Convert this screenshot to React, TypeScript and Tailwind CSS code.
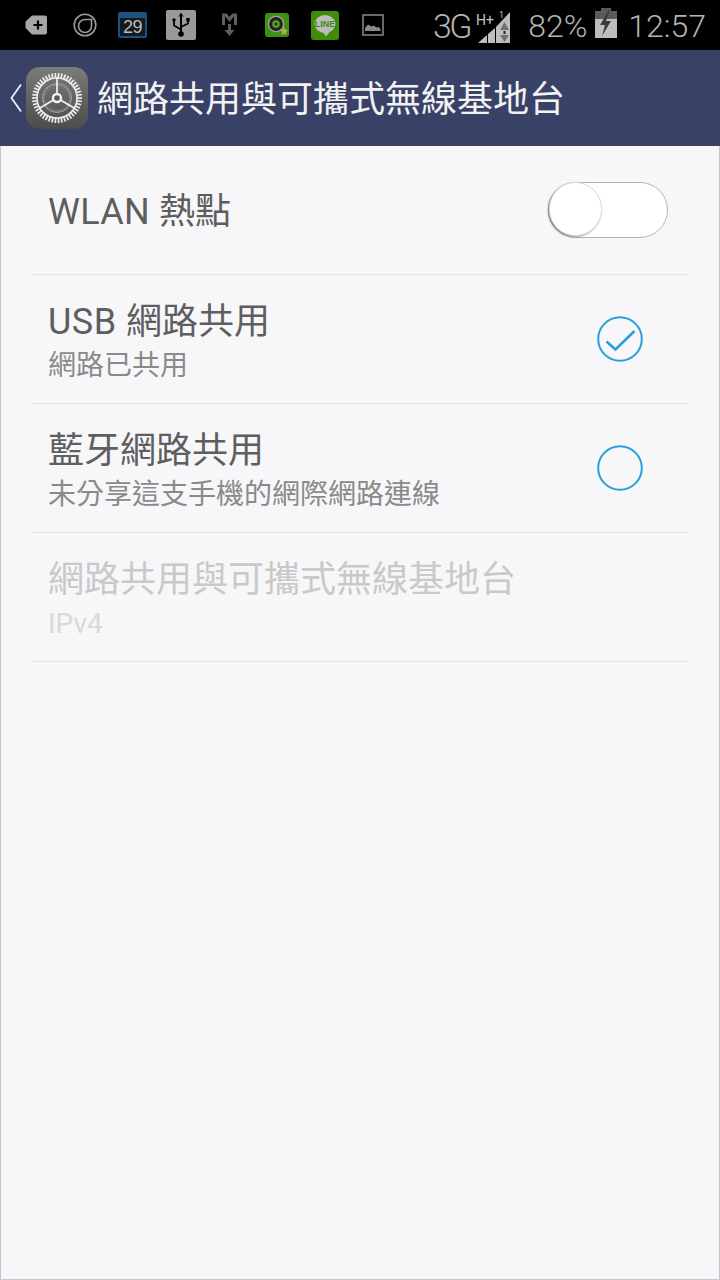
import React from "react";

const FONT = "font-['Roboto','Noto_Sans_CJK_TC',sans-serif]";

function Teeth({ count, r1, r2, color, w }: { count: number; r1: number; r2: number; color: string; w: number }) {
  const out = [];
  for (let i = 0; i < count; i++) {
    const a = (i / count) * Math.PI * 2;
    out.push(
      <line
        key={i}
        x1={31 + Math.cos(a) * r1}
        y1={31 + Math.sin(a) * r1}
        x2={31 + Math.cos(a) * r2}
        y2={31 + Math.sin(a) * r2}
        stroke={color}
        strokeWidth={w}
      />
    );
  }
  return <g>{out}</g>;
}

function SettingsIcon() {
  return (
    <svg width="62" height="62" viewBox="0 0 62 62" className="shrink-0">
      <defs>
        <linearGradient id="gearBg" x1="0" y1="0" x2="0" y2="1">
          <stop offset="0" stopColor="#7b7b79" />
          <stop offset="1" stopColor="#4c4c4b" />
        </linearGradient>
      </defs>
      <rect width="62" height="62" rx="14" fill="url(#gearBg)" />
      <Teeth count={46} r1={20} r2={25} color="#ececec" w={1.7} />
      <circle cx="31" cy="31" r="20" fill="none" stroke="#ececec" strokeWidth="1.600" />
      <circle cx="31" cy="31" r="14.500" fill="none" stroke="#a3a3a3" strokeWidth="1" />
      <Teeth count={40} r1={12} r2={14.5} color="#989898" w={0.9} />
      <g stroke="#f2f2f2" strokeWidth="1.700">
        <line x1="31" y1="27" x2="31" y2="10" />
        <line x1="27.500" y1="33" x2="13" y2="41.500" />
        <line x1="34.500" y1="33" x2="49" y2="41.500" />
      </g>
      <circle cx="31" cy="31" r="4" fill="#555" stroke="#f2f2f2" strokeWidth="2.400" />
    </svg>
  );
}

function StatusIcons() {
  return (
    <div className="flex items-center">
      {/* tag with plus */}
      <svg width="22" height="20" viewBox="0 0 22 20" className="ml-[25px]">
        <path d="M7 0.500H20a2 2 0 0 1 2 2V17.500a2 2 0 0 1-2 2H7L0.500 13V6.500Z" fill="#a6a6a6" />
        <path d="M13 5.500v9M8.500 10h9" stroke="#000" strokeWidth="2.200" />
      </svg>
      {/* circle */}
      <svg width="24" height="24" viewBox="0 0 24 24" className="ml-[26px]">
        <circle cx="12" cy="12" r="10.800" fill="none" stroke="#9a9a9a" strokeWidth="1.600" />
        <path d="M17.500 6.500H12a6.500 6.500 0 1 0 6.500 6.500V6.500Z" fill="none" stroke="#9a9a9a" strokeWidth="1.600" />
      </svg>
      {/* calendar */}
      <div className="ml-[21px] flex h-[26px] w-[29px] flex-col rounded-[2px] bg-[#1c5280] font-['Liberation_Sans',sans-serif]">
        <div className="mx-[7px] mt-[3px] h-px bg-[#8fb2cf]" />
        <div className="mx-[2px] mb-[2px] mt-[3px] flex flex-1 items-center justify-center bg-[#141a20] text-[18px] leading-none tracking-[-0.5px] text-[#bcbcbc]">
          29
        </div>
      </div>
      {/* usb */}
      <svg width="30" height="30" viewBox="0 0 30 30" className="ml-[19px]">
        <rect width="30" height="30" rx="2" fill="#999" />
        <path d="M15 3.500V24" stroke="#000" strokeWidth="2" />
        <path d="M15 3l-2.600 3.600h5.200Z" fill="#000" />
        <circle cx="15" cy="24" r="2.800" fill="#000" />
        <path d="M8 11v4.500l7 4M22 10v3.500l-7 3.500" fill="none" stroke="#000" strokeWidth="1.800" />
        <circle cx="8" cy="10" r="1.700" fill="#000" />
        <rect x="20.300" y="8" width="3.400" height="3.400" fill="#000" />
      </svg>
      {/* M down */}
      <svg width="15" height="24" viewBox="0 0 15 24" className="ml-[26px]">
        <path d="M1.500 12V2h2.500l3.500 4.500L11 2h2.500v10" fill="none" stroke="#5f5f5f" strokeWidth="3" />
        <path d="M6 11h3v6h3.500L7.500 23 2.500 17H6Z" fill="#5f5f5f" />
      </svg>
      {/* camera */}
      <svg width="24" height="24" viewBox="0 0 24 24" className="ml-[28px]">
        <rect width="24" height="24" rx="3" fill="#3f9113" />
        <circle cx="11" cy="11" r="7.600" fill="#222" stroke="#a5a5a5" strokeWidth="1.400" />
        <circle cx="11" cy="11" r="3.800" fill="#5ea32f" />
        <circle cx="11" cy="11" r="1.600" fill="#17330c" />
        <path d="M19 14l1.300 2.700 2.700.3-2 2 .5 3-2.500-1.400L16.500 22l.5-3-2-2 2.700-.3Z" fill="#b9ae4b" />
      </svg>
      {/* LINE */}
      <div className="relative ml-[22px] h-[29px] w-[28px] rounded-[3px] bg-[#3f8c0b]">
        <svg width="28" height="29" viewBox="0 0 28 29" className="absolute inset-0">
          <ellipse cx="14" cy="13" rx="10.500" ry="9" fill="#bcbcbc" />
          <path d="M12 21l3 4.500 3.500-4.500Z" fill="#bcbcbc" />
        </svg>
        <span className="absolute inset-x-0 top-[8px] text-center font-['Liberation_Sans',sans-serif] text-[9px] font-bold leading-[10px] text-[#3f8c0b]">
          LINE
        </span>
      </div>
      {/* picture */}
      <svg width="22" height="22" viewBox="0 0 22 22" className="ml-[23px]">
        <rect x="1" y="1" width="20" height="20" fill="none" stroke="#7b7b7b" strokeWidth="1.700" />
        <path d="M3 17V14l3-3.500 3.500 2 2-1 3 2 2-.5 2 2V17Z" fill="#8a8a8a" />
      </svg>
    </div>
  );
}

function StatusRight() {
  return (
    <div className={`flex items-center text-[#b3b3b3] ${FONT}`}>
      <span className="mt-[2px] text-[34px] font-light leading-none tracking-[-2.500px]">3G</span>
      <svg width="36" height="34" viewBox="0 0 36 34" className="ml-[6px] mt-[4px]">
        <path d="M2 33 L11 25 V33Z M12 33 V24 L19 18 V33Z M20 33 V17 L34 2 V33Z" fill="#bdbdbd" />
        <path d="M28.500 12l4.500 8H24ZM28.500 32l-4.500-7h9Z" fill="#6f6f6f" />
        <rect x="27.500" y="21" width="2" height="3" fill="#222" />
        <text x="0" y="15" fontSize="14" fill="#c4c4c4" fontFamily="Roboto, sans-serif">
          H+
        </text>
        <text x="23" y="8" fontSize="9" fill="#c4c4c4" fontFamily="Roboto, sans-serif">
          1
        </text>
      </svg>
      <span className="ml-[16px] mt-[2px] text-[32px] font-light leading-none">82%</span>
      <svg width="22" height="30" viewBox="0 0 22 30" className="ml-[8px] -mt-[4px]">
        <rect x="6" y="0" width="10" height="3" fill="#5a5a5a" />
        <rect x="0" y="3" width="22" height="8" fill="#5a5a5a" />
        <rect x="0" y="11" width="22" height="19" fill="#bdbdbd" />
        <path d="M14 2 L5 17h5l-3 11 9-15h-5l4-11Z" fill="#3a3a3a" />
      </svg>
      <span className="ml-[11px] mt-[2px] text-[32px] font-light leading-none">12:57</span>
    </div>
  );
}

function Row({
  title,
  sub,
  right,
  disabled,
}: {
  title: React.ReactNode;
  sub?: string;
  right?: React.ReactNode;
  disabled?: boolean;
}) {
  return (
    <div className="mx-[32px] flex h-[129px] items-center justify-between border-b border-[#e3e3e8] pl-[16px]">
      <div className={`flex flex-col ${sub ? "pt-[6px]" : "pt-[4px]"}`}>
        <div className={`text-[36px] leading-[42px] ${disabled ? "text-[#c9c9c9]" : "text-[#5e5e5e]"}`}>{title}</div>
        {sub && (
          <div className={`mt-[6px] text-[28px] leading-[34px] ${disabled ? "text-[#d9d9d9]" : "text-[#8a8a8a]"}`}>
            {sub}
          </div>
        )}
      </div>
      {right}
    </div>
  );
}

function Radio({ checked }: { checked?: boolean }) {
  return (
    <svg width="46" height="46" viewBox="0 0 46 46" className="mr-[45px] shrink-0">
      <circle cx="23" cy="23" r="21.800" fill="none" stroke="#27a0da" strokeWidth="2" />
      {checked && <path d="M9.500 25.500 L18.500 33.500 L37.500 15" fill="none" stroke="#27a0da" strokeWidth="2.600" />}
    </svg>
  );
}

function Toggle() {
  return (
    <div className="relative mr-[20px] h-[56px] w-[120px] shrink-0 rounded-full border border-[#b3b3ba] bg-white">
      <div className="absolute left-0 -top-px h-[54px] w-[53px] rounded-full border border-[#dcdcdc] bg-white shadow-[-1px_1px_2px_rgba(0,0,0,0.4)]" />
    </div>
  );
}

export default function App() {
  return (
    <div className={`flex h-[1280px] w-[720px] flex-col overflow-hidden bg-[#f7f7fa] ${FONT}`}>
      <div className="flex h-[50px] shrink-0 items-center justify-between bg-black pr-[14px]">
        <StatusIcons />
        <StatusRight />
      </div>
      <div className="flex h-[96px] shrink-0 items-center bg-[#3a4166]">
        <svg width="12" height="30" viewBox="0 0 12 30" className="ml-[10px] mr-[4px] shrink-0">
          <path d="M11 1.500 L1.500 15 L11 28.500" fill="none" stroke="#f0f0f0" strokeWidth="1.800" />
        </svg>
        <SettingsIcon />
        <div className="ml-[9px] pt-[4px] text-[36px] leading-none text-[#f2f2f2]">網路共用與可攜式無線基地台</div>
      </div>
      <div className="flex-1 border-x border-b border-[#c6c6cc]">
        <div className="-mx-px">
          <Row
            title={
              <>
                <span className="tracking-[0.25px]">WLAN </span>熱點
              </>
            }
            right={<Toggle />}
          />
          <Row
            title={
              <>
                <span className="tracking-[0.5px]">USB </span>網路共用
              </>
            }
            sub="網路已共用"
            right={<Radio checked />}
          />
          <Row title="藍牙網路共用" sub="未分享這支手機的網際網路連線" right={<Radio />} />
          <Row title="網路共用與可攜式無線基地台" sub="IPv4" disabled />
        </div>
      </div>
    </div>
  );
}
